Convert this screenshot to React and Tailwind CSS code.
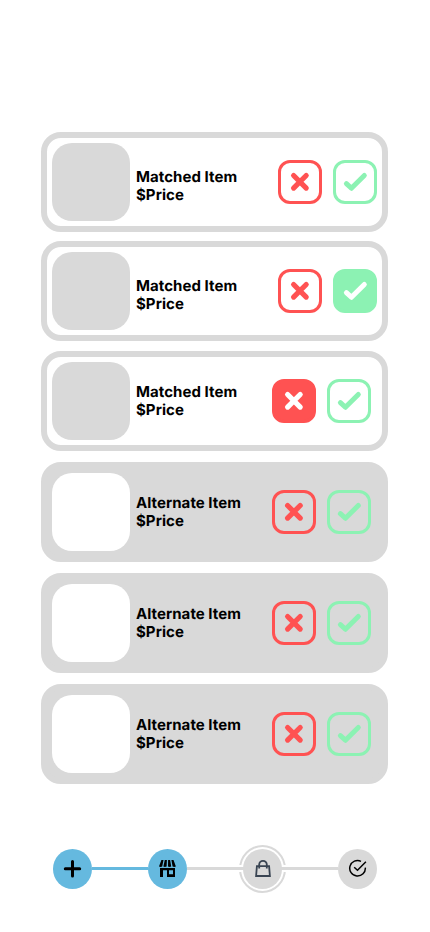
const rows = [
  { kind: "Matched", gap: "", right: "pr-[5px]", text: "pt-[30px]" },
  { kind: "Matched", gap: "mt-[9px]", right: "pr-[5px]", text: "pt-[30px]", accepted: true },
  { kind: "Matched", gap: "mt-[10px]", right: "pr-[11px]", text: "pt-[26px]", rejected: true },
  { kind: "Alternate", gap: "mt-[11px]", right: "pr-[11px]", text: "pt-[26px]" },
  { kind: "Alternate", gap: "mt-[11px]", right: "pr-[11px]", text: "pt-[26px]" },
  { kind: "Alternate", gap: "mt-[11px]", right: "pr-[11px]", text: "pt-[26px]" },
];

function RejectButton({ filled }) {
  return (
    <button
      aria-label="Reject"
      className={`flex size-11 items-center justify-center rounded-[12px] border-3 border-[#ff5252] ${filled ? "bg-[#ff5252] text-white" : "text-[#ff5252]"}`}
    >
      <svg className="size-[38px] shrink-0" viewBox="0 0 38 38" fill="none" stroke="currentColor" strokeWidth="5.2" strokeLinecap="round">
        <path d="M12.6 12.5 25.2 25.1M25.2 12.5 12.6 25.1" />
      </svg>
    </button>
  );
}

function AcceptButton({ filled }) {
  return (
    <button
      aria-label="Accept"
      className={`flex size-11 items-center justify-center rounded-[12px] border-3 border-[#8cf2b3] ${filled ? "bg-[#8cf2b3] text-white" : "text-[#8cf2b3]"}`}
    >
      <svg className="size-[38px] shrink-0" viewBox="0 0 38 38" fill="none" stroke="currentColor" strokeWidth="5" strokeLinecap="round" strokeLinejoin="round">
        <path d="M10.4 20.6 15.4 25.3 28.3 12.5" />
      </svg>
    </button>
  );
}

function ItemCard({ row }) {
  const matched = row.kind === "Matched";
  return (
    <article
      className={`flex h-[100px] w-[347px] items-start rounded-[20px] border-6 border-[#d9d9d9] pt-[5px] pl-[5px] ${row.gap} ${row.right} ${matched ? "bg-white" : "bg-[#d9d9d9]"}`}
    >
      <div className={`size-[78px] shrink-0 rounded-[20px] ${matched ? "bg-[#d9d9d9]" : "bg-white"}`} />
      <p className={`-mt-[5px] ml-[6px] text-[15px] leading-[18px] font-bold tracking-[0.05px] whitespace-nowrap [text-rendering:geometricPrecision] ${row.text}`}>
        {row.kind} Item
        <br />
        $Price
      </p>
      <div className="mt-[17px] ml-auto flex gap-[11px]">
        <RejectButton filled={row.rejected} />
        <AcceptButton filled={row.accepted} />
      </div>
    </article>
  );
}

function Step({ done, children }) {
  return (
    <div className={`flex h-10 w-[39px] shrink-0 items-center justify-center rounded-[50%] ${done ? "bg-[#65b9df]" : "bg-[#d9d9d9]"}`}>
      {children}
    </div>
  );
}

export default function App() {
  return (
    <main className="h-[932px] w-[430px] overflow-hidden bg-white pt-[132px] pl-[41px] font-['Inter','Liberation_Sans',sans-serif] text-black">
      {rows.map((row, i) => (
        <ItemCard key={i} row={row} />
      ))}
      <nav className="mt-[61px] ml-[8px] flex h-[48px] w-[332px] items-center pl-[4px]">
        <Step done>
          <svg width="19" height="18" viewBox="0 0 19 18" fill="none" stroke="currentColor" strokeWidth="3" strokeLinecap="round">
            <path d="M9.5 1.5V15.9M2.3 8.7H16.7" />
          </svg>
        </Step>
        <div className="mb-px h-[3px] w-[56px] shrink-0 bg-[#65b9df]" />
        <Step done>
          <svg width="19" height="18" viewBox="0 0 19 18" fill="currentColor">
            <path d="M3.4 0H5.5L4.2 6.6Q2.6 7.4 1 6.6ZM6.8 0H8.9L8.6 6.6Q6.9 7.4 5.4 6.6ZM10.1 0H12.1L13.2 6.6Q11.6 7.4 10 6.6ZM13.4 0H15.5L17.9 6.6Q16.2 7.4 14.6 6.6Z" />
            <path fillRule="evenodd" d="M2 8H17V17H9V10.3H5V17H2ZM11 10.3V14.2H15V10.3Z" />
          </svg>
        </Step>
        <div className="mb-px h-[3px] w-[52px] shrink-0 bg-[#d9d9d9]" />
        <div className="relative flex h-12 w-[47px] shrink-0 items-center justify-center rounded-[50%] border-2 border-[#d9d9d9] bg-white">
          <span className="absolute top-[18px] -left-[2px] h-[7px] w-[47px] border-y-2 border-white bg-[#d9d9d9]" />
          <div className="relative">
            <Step>
              <svg width="18" height="20" viewBox="0 0 18 20" fill="none" stroke="#394452" strokeWidth="1.8">
                <path d="M2.9 7.2H15.1L15.9 17H2.1ZM5.2 9.4V5.6a3.8 3.8 0 0 1 7.6 0V9.4" />
              </svg>
            </Step>
          </div>
        </div>
        <div className="mb-px h-[3px] w-[52px] shrink-0 bg-[#d9d9d9]" />
        <Step>
          <svg width="20" height="20" viewBox="0 0 20 20" fill="none" stroke="currentColor" strokeWidth="1.5">
            <path d="M13 2.3A7.8 7.8 0 1 0 17.3 8.6M6.2 8.2 9.5 11.3 17.9 2.8" />
          </svg>
        </Step>
      </nav>
    </main>
  );
}
